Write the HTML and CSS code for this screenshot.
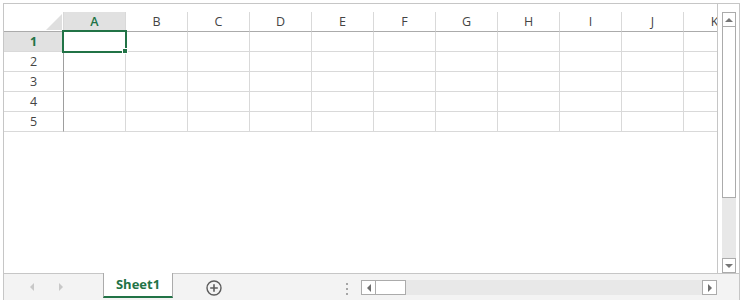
FILE: index.html
```html
<!DOCTYPE html>
<html lang="en">

<head>
    <meta charset="UTF-8">
    <title>Sheet1</title>
    <link rel="stylesheet" href="styles.css">
</head>

<body>
    <div class="book">
        <div class="main">
            <div class="sheet">
                <div class="grid">
                    <div class="corner"><span class="tri"></span></div>
                    <div class="colhead sel">A</div>
                    <div class="colhead">B</div>
                    <div class="colhead">C</div>
                    <div class="colhead">D</div>
                    <div class="colhead">E</div>
                    <div class="colhead">F</div>
                    <div class="colhead">G</div>
                    <div class="colhead">H</div>
                    <div class="colhead">I</div>
                    <div class="colhead">J</div>
                    <div class="colhead">K</div>

                    <div class="rowhead sel">1</div>
                    <div class="cell active"><span class="handle"></span></div>
                    <div class="cell"></div><div class="cell"></div><div class="cell"></div><div class="cell"></div><div class="cell"></div>
                    <div class="cell"></div><div class="cell"></div><div class="cell"></div><div class="cell"></div><div class="cell"></div>

                    <div class="rowhead">2</div>
                    <div class="cell"></div><div class="cell"></div><div class="cell"></div><div class="cell"></div><div class="cell"></div><div class="cell"></div>
                    <div class="cell"></div><div class="cell"></div><div class="cell"></div><div class="cell"></div><div class="cell"></div>

                    <div class="rowhead">3</div>
                    <div class="cell"></div><div class="cell"></div><div class="cell"></div><div class="cell"></div><div class="cell"></div><div class="cell"></div>
                    <div class="cell"></div><div class="cell"></div><div class="cell"></div><div class="cell"></div><div class="cell"></div>

                    <div class="rowhead">4</div>
                    <div class="cell"></div><div class="cell"></div><div class="cell"></div><div class="cell"></div><div class="cell"></div><div class="cell"></div>
                    <div class="cell"></div><div class="cell"></div><div class="cell"></div><div class="cell"></div><div class="cell"></div>

                    <div class="rowhead">5</div>
                    <div class="cell"></div><div class="cell"></div><div class="cell"></div><div class="cell"></div><div class="cell"></div><div class="cell"></div>
                    <div class="cell"></div><div class="cell"></div><div class="cell"></div><div class="cell"></div><div class="cell"></div>
                </div>
            </div>
            <div class="vscroll">
                <div class="sbtn"><span class="tri-up"></span></div>
                <div class="vthumb"></div>
                <div class="vtrack"></div>
                <div class="sbtn"><span class="tri-down"></span></div>
            </div>
        </div>
        <div class="tabbar">
            <div class="nav">
                <span class="tri-left pale"></span>
                <span class="tri-right pale"></span>
            </div>
            <div class="tab">Sheet1</div>
            <div class="add">
                <svg width="16" height="16" viewBox="0 0 16 16">
                    <circle cx="8" cy="8" r="7" fill="none" stroke="#5c5c5c" stroke-width="1.4" />
                    <path d="M8 4.2v7.6M4.2 8h7.6" stroke="#5c5c5c" stroke-width="1.6" />
                </svg>
            </div>
            <div class="split">
                <span></span><span></span><span></span>
            </div>
            <div class="hscroll">
                <div class="sbtn hbtn"><span class="tri-left"></span></div>
                <div class="hthumb"></div>
                <div class="htrack"></div>
                <div class="sbtn hbtn"><span class="tri-right"></span></div>
            </div>
        </div>
    </div>
</body>

</html>
```

FILE: styles.css
```css
*,
*::before,
*::after {
    padding: 0;
    margin: 0;
    box-sizing: border-box;
}

body {
    background-color: #fff;
    font-family: "Open Sans", "Noto Sans", sans-serif;
}

.book {
    display: flex;
    flex-direction: column;
    margin: 3px 0 0 3px;
    width: 737px;
    height: 297px;
    border: 1px solid #c6c6c6;
    border-bottom: none;
}

.main {
    display: flex;
    height: 269px;
}

.sheet {
    width: 714px;
    padding-top: 8px;
    border-right: 1px solid #c6c6c6;
    overflow: hidden;
}

.grid {
    display: grid;
    grid-template-columns: 60px repeat(11, 62px);
    grid-auto-rows: 20px;
}

.corner,
.colhead,
.rowhead,
.cell {
    border-right: 1px solid #d9d9d9;
    border-bottom: 1px solid #d9d9d9;
}

.corner {
    display: flex;
    justify-content: flex-end;
    align-items: flex-end;
    padding: 0 1px 1px 0;
    border-bottom-color: #ababab;
}

.tri {
    width: 0;
    height: 0;
    border-left: 16px solid transparent;
    border-bottom: 16px solid #dfdfdf;
}

.colhead {
    display: flex;
    justify-content: center;
    align-items: center;
    font-size: 12.5px;
    color: #444;
    border-bottom-color: #ababab;
}

.rowhead {
    display: flex;
    justify-content: center;
    align-items: center;
    font-size: 12.5px;
    color: #444;
    border-right-color: #9e9e9e;
}

.sel {
    background-color: #e1e1e1;
    color: #217346;
}

.rowhead.sel {
    font-weight: 700;
}

.colhead.sel {
    font-weight: 600;
}

.active {
    position: relative;
}

.active::after {
    content: "";
    position: absolute;
    left: -2px;
    top: -2px;
    width: 65px;
    height: 23px;
    border: 2px solid #217346;
}

.handle {
    position: absolute;
    left: 58px;
    top: 16px;
    width: 6px;
    height: 6px;
    background-color: #217346;
    border: 1px solid #fff;
    z-index: 1;
}

/* vertical scroll */
.vscroll {
    display: flex;
    flex-direction: column;
    width: 21px;
    padding: 8px 3px 0 4px;
}

.sbtn {
    display: flex;
    justify-content: center;
    align-items: center;
    height: 15px;
    background-color: #fff;
    border: 1px solid #ababab;
}

.vthumb {
    height: 171px;
    background-color: #fff;
    border: 1px solid #ababab;
    border-top: none;
}

.vtrack {
    flex: 1;
    background-color: #e8e8e8;
}

.tri-up,
.tri-down {
    width: 0;
    height: 0;
    border-left: 4px solid transparent;
    border-right: 4px solid transparent;
}

.tri-up {
    border-bottom: 4px solid #777;
}

.tri-down {
    border-top: 4px solid #777;
}

.tri-left,
.tri-right {
    width: 0;
    height: 0;
    border-top: 4px solid transparent;
    border-bottom: 4px solid transparent;
}

.tri-left {
    border-right: 4px solid #6e6e6e;
}

.tri-right {
    border-left: 4px solid #6e6e6e;
}

.tri-left.pale {
    border-right-color: #c8c8c8;
}

.tri-right.pale {
    border-left-color: #c8c8c8;
}

/* sheet tabs */
.tabbar {
    display: flex;
    height: 27px;
    padding-right: 22px;
    background-color: #f3f3f3;
    border-top: 1px solid #c6c6c6;
}

.nav {
    display: flex;
    align-items: center;
    gap: 25px;
    width: 99px;
    padding-left: 26px;
}

.tab {
    width: 70px;
    height: 25px;
    margin-top: -1px;
    background-color: #fff;
    border-left: 1px solid #ababab;
    border-right: 1px solid #ababab;
    border-bottom: 2px solid #217346;
    color: #217346;
    font-size: 13px;
    font-weight: 700;
    text-align: center;
    line-height: 23px;
}

.add {
    padding: 6px 0 0 33px;
}

.add svg {
    display: block;
}

.split {
    display: flex;
    flex-direction: column;
    gap: 3px;
    margin: 9px 13px 0 auto;
}

.split span {
    width: 2px;
    height: 2px;
    background-color: #a6a6a6;
}

.hscroll {
    display: flex;
    width: 356px;
    height: 15px;
    margin-top: 6px;
    background-color: #e8e8e8;
}

.hbtn {
    width: 15px;
}

.hthumb {
    width: 30px;
    background-color: #fff;
    border: 1px solid #ababab;
    border-left: none;
}

.htrack {
    flex: 1;
}
```
